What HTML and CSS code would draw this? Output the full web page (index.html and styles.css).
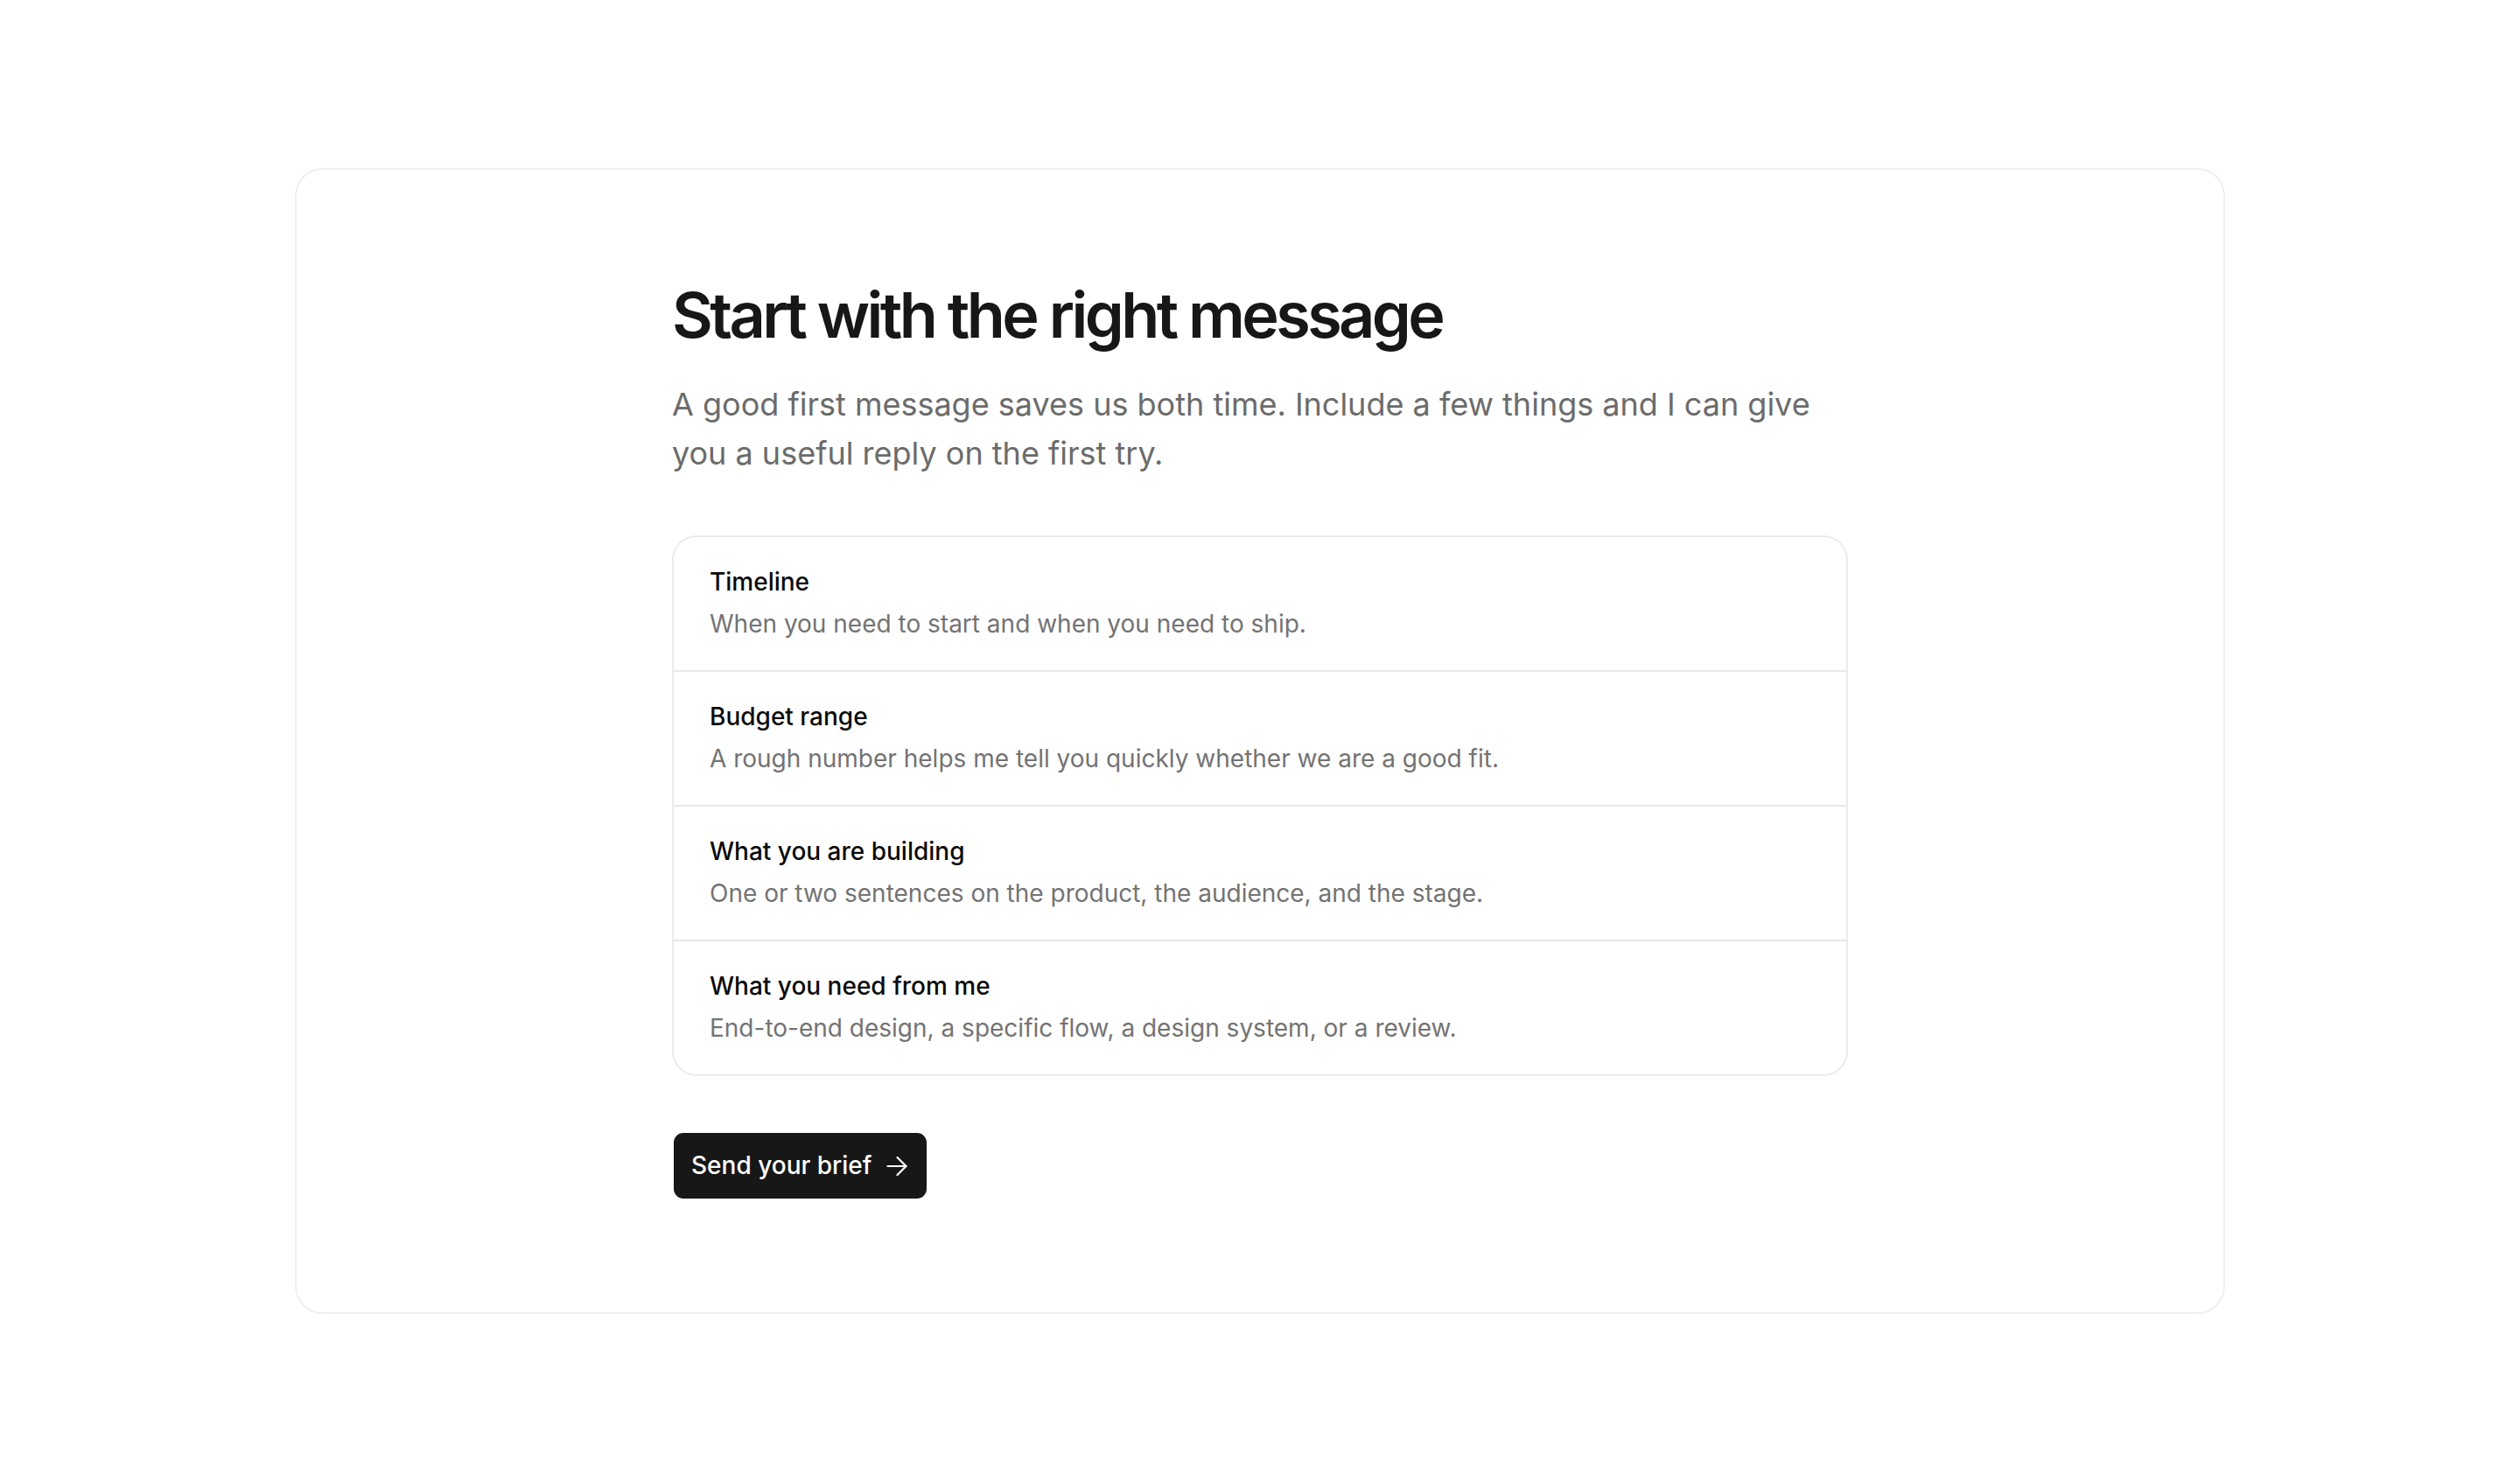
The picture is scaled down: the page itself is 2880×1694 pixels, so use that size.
FILE: index.html
```html
<!DOCTYPE html>
<html lang="en">
<head>
    <meta charset="UTF-8">
    <meta name="viewport" content="width=device-width, initial-scale=1.0">
    <title>Start with the right message</title>
    <link rel="stylesheet" href="styles.css">
</head>
<body>
    <section class="card">
        <div class="content">
            <h1>Start with the right message</h1>
            <p class="lead">A good first message saves us both time. Include a few things and I can give you a useful reply on the first try.</p>

            <ul class="checklist">
                <li class="item">
                    <div class="item-title">Timeline</div>
                    <div class="item-text">When you need to start and when you need to ship.</div>
                </li>
                <li class="item">
                    <div class="item-title">Budget range</div>
                    <div class="item-text">A rough number helps me tell you quickly whether we are a good fit.</div>
                </li>
                <li class="item">
                    <div class="item-title">What you are building</div>
                    <div class="item-text">One or two sentences on the product, the audience, and the stage.</div>
                </li>
                <li class="item">
                    <div class="item-title">What you need from me</div>
                    <div class="item-text">End-to-end design, a specific flow, a design system, or a review.</div>
                </li>
            </ul>

            <a class="button" href="#">
                Send your brief
                <svg class="arrow" width="24" height="22" viewBox="0 0 24 22" fill="none" stroke="currentColor" stroke-width="2.2" stroke-linecap="round" stroke-linejoin="round">
                    <path d="M1.5 11h21"/>
                    <path d="M12.5 1l10 10-10 10"/>
                </svg>
            </a>
        </div>
    </section>
</body>
</html>
```

FILE: styles.css
```css
* {
    box-sizing: border-box;
}

body {
    margin: 0;
    min-height: 100vh;
    display: flex;
    align-items: center;
    justify-content: center;
    background: #fff;
    font-family: Inter, "Noto Sans", Arial, sans-serif;
    color: #171717;
}

.card {
    width: 2206px;
    padding: 126px 0 130px;
    border: 2px solid #efefef;
    border-radius: 32px;
    background: #fff;
}

.content {
    max-width: 1344px;
    margin: 0 auto;
}

h1 {
    margin: 0;
    font-size: 72px;
    line-height: 79px;
    font-weight: 600;
    letter-spacing: -0.05em;
    color: #171717;
}

.lead {
    margin: 35px 0 0;
    max-width: 1320px;
    font-size: 36px;
    line-height: 56px;
    color: #6b6b6b;
}

.checklist {
    list-style: none;
    margin: 66px 0 0;
    padding: 0;
    border: 2px solid #ebebeb;
    border-radius: 28px;
}

.item {
    padding: 30px 41px 32px;
    font-size: 28px;
    line-height: 42px;
}

.item + .item {
    border-top: 2px solid #e8e8e8;
}

.item-title {
    font-weight: 500;
    color: #0a0a0a;
}

.item-text {
    margin-top: 6px;
    color: #737373;
}

.button {
    display: inline-flex;
    align-items: center;
    gap: 17px;
    margin: 65px 0 0 2px;
    padding: 16px 22px 16px 20px;
    background: #171717;
    color: #fff;
    border-radius: 11px;
    font-size: 28px;
    line-height: 43px;
    font-weight: 500;
    text-decoration: none;
}

.arrow {
    display: block;
}
```
